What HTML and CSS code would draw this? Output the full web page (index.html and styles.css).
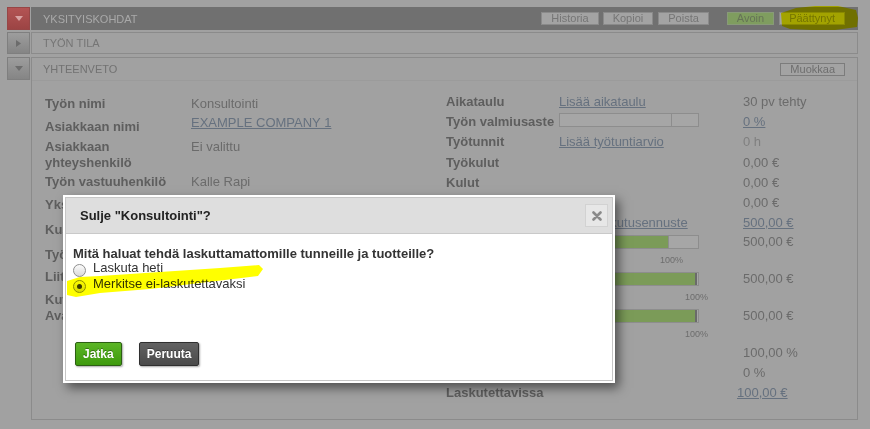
FILE: index.html
```html
<!DOCTYPE html>
<html lang="fi">
<head>
<meta charset="utf-8">
<title>Yksityiskohdat</title>
<link rel="stylesheet" href="styles.css">
</head>
<body>
<div class="page">
  <div class="acc-row">
    <div class="toggle red"><svg width="8" height="6" viewBox="0 0 8 6"><polygon points="0,0 8,0 4,5" fill="#d9a3a3"/></svg></div>
    <div class="acc-bar dark">
      <span class="acc-title">Yksityiskohdat</span>
      <span class="btns">
        <span class="hbtn">Historia</span>
        <span class="hbtn g4">Kopioi</span>
        <span class="hbtn g5">Poista</span>
        <span class="hbtn green g18">Avoin</span>
        <span class="hbtn g5">Päättynyt</span>
      </span>
    </div>
  </div>
  <div class="acc-row row-2">
    <div class="toggle short"><svg width="6" height="7" viewBox="0 0 6 7"><polygon points="0,0 5,3.5 0,7" fill="#6c6c6c"/></svg></div>
    <div class="acc-bar plain">Työn tila</div>
  </div>
  <div class="acc-row row-3">
    <div class="toggle"><svg width="8" height="6" viewBox="0 0 8 6"><polygon points="0,0 8,0 4,5" fill="#6c6c6c"/></svg></div>
    <div class="panel">
      <div class="panel-head">
        <span class="acc-title">Yhteenveto</span>
        <span class="hbtn edit">Muokkaa</span>
      </div>
      <div class="content">
        <div class="grid-left">
          <div class="lbl">Työn nimi</div><div class="val">Konsultointi</div>
          <div class="lbl down">Asiakkaan nimi</div><div class="val"><a class="lnk" href="#">EXAMPLE COMPANY 1</a></div>
          <div class="lbl">Asiakkaan yhteyshenkilö</div><div class="val">Ei valittu</div>
          <div class="lbl">Työn vastuuhenkilö</div><div class="val">Kalle Rapi</div>
          <div class="lbl">Yksikkö</div><div class="val">Konsultointi</div>
          <div class="lbl">Kustannuspaikka</div><div class="val">Ei valittu</div>
          <div class="lbl">Työn tyyppi</div><div class="val">Tuntityö</div>
          <div class="lbl">Liitteet</div><div class="val">Ei liitteitä</div>
          <div class="lbl">Kuvaus<br>Avainsanat</div><div class="val"></div>
        </div>
        <div class="grid-right">
          <div class="lbl">Aikataulu</div><div class="val"><a class="lnk" href="#">Lisää aikataulu</a></div><div class="val">30 pv tehty</div>
          <div class="lbl">Työn valmiusaste</div><div class="val"><div class="bar up"><div class="marker m80"></div></div></div><div class="val"><a class="lnk" href="#">0 %</a></div>
          <div class="lbl">Työtunnit</div><div class="val"><a class="lnk" href="#">Lisää työtuntiarvio</a></div><div class="val light">0 h</div>
          <div class="lbl">Työkulut</div><div class="val"></div><div class="val">0,00 €</div>
          <div class="lbl">Kulut</div><div class="val"></div><div class="val">0,00 €</div>
          <div class="lbl">Yhteensä</div><div class="val"></div><div class="val">0,00 €</div>
          <div class="lbl">Laskutusennuste</div><div class="val"><a class="lnk" href="#">Lisää laskutusennuste</a></div><div class="val"><a class="lnk" href="#">500,00 €</a></div>
          <div class="lbl">Laskutettu</div><div class="val"><div class="bar"><div class="fill" style="width:80%"></div></div><div class="pct p80">100%</div></div><div class="val">500,00 €</div>
          <div class="lbl">Hyväksytty</div><div class="val"><div class="bar"><div class="fill full" style="width:100%"></div></div><div class="pct p100">100%</div></div><div class="val">500,00 €</div>
          <div class="lbl">Maksettu</div><div class="val"><div class="bar"><div class="fill full" style="width:100%"></div></div><div class="pct p100">100%</div></div><div class="val">500,00 €</div>
          <div class="lbl">Kate</div><div class="val"></div><div class="val">100,00 %</div>
          <div class="lbl">Ylitys</div><div class="val"></div><div class="val">0 %</div>
          <div class="lbl">Laskutettavissa</div><div class="val"></div><div class="val shift"><a class="lnk" href="#">100,00 €</a></div>
        </div>
      </div>
    </div>
  </div>
</div>

<div class="dialog">
  <div class="dialog-inner">
    <div class="dialog-head">
      <span class="dialog-title">Sulje "Konsultointi"?</span>
      <span class="close"><svg width="10" height="10" viewBox="0 0 10 10"><path d="M1.5 1.5 L8.5 8.5 M8.5 1.5 L1.5 8.5" stroke="#8a8a8a" stroke-width="2.6" stroke-linecap="round"/></svg></span>
    </div>
    <div class="dialog-body">
      <div class="question">Mitä haluat tehdä laskuttamattomille tunneille ja tuotteille?</div>
      <label class="opt"><span class="radio"></span>Laskuta heti</label>
      <label class="opt"><span class="radio checked"></span>Merkitse ei-laskutettavaksi</label>
    </div>
    <div class="dialog-foot">
      <span class="dbtn ok">Jatka</span>
      <span class="dbtn cancel">Peruuta</span>
    </div>
  </div>
</div>

<svg class="marks" width="870" height="429" viewBox="0 0 870 429">
  <path d="M781 13 L796 8 L815 6 L838 6 L856 10 L858 18 L857 27 L835 30 L812 30 L790 29 L782 26 Z" fill="#ffff00"/>
  <path d="M67 281 L80 277 L100 276 L160 272 L220 268 L259 265 L263 269 L258 276 L200 283 L150 289 L100 293 L76 297 L67 295 Z" fill="#ffff00"/>
</svg>
</body>
</html>
```

FILE: styles.css
```css
* { box-sizing: border-box; }
html, body { margin: 0; padding: 0; }
body {
  width: 870px;
  height: 429px;
  background: #a1a1a1;
  font-family: "Liberation Sans", Arial, sans-serif;
  position: relative;
  overflow: hidden;
}
.page { padding: 7px 12px 0 7px; }

.acc-row { display: flex; gap: 1px; }
.row-2 { margin-top: 2px; }
.row-3 { margin-top: 3px; }

.toggle {
  flex: none;
  width: 23px;
  height: 23px;
  display: flex;
  align-items: center;
  justify-content: center;
  border: 1px solid #7f7f7f;
  background: linear-gradient(#9d9d9d, #858585);
}
.toggle.short { height: 22px; }
.toggle.red {
  background: linear-gradient(#b35454, #9c4444);
  border-color: #974646;
}

.acc-bar {
  flex: 1;
  height: 23px;
  display: flex;
  align-items: center;
  justify-content: space-between;
  font-size: 11px;
  text-transform: uppercase;
}
.acc-bar.dark {
  background: #707070;
  color: #a9a9a9;
  padding: 0 13px 0 12px;
}
.acc-bar.plain {
  height: 22px;
  border: 1px solid #8b8b8b;
  color: #757575;
  padding: 0 12px 0 11px;
}
.btns { display: flex; align-items: center; text-transform: none; }
.hbtn {
  display: inline-block;
  height: 13px;
  line-height: 11px;
  padding: 0 9px;
  border: 1px solid #8a8a8a;
  background: #a3a3a3;
  color: #757575;
  font-size: 11px;
  text-transform: none;
}
.hbtn.g4 { margin-left: 4px; }
.hbtn.g5 { margin-left: 5px; }
.hbtn.g18 { margin-left: 18px; }
.hbtn.green {
  background: #7f9d5f;
  border-color: #889a78;
  color: #657356;
}
.hbtn.edit { border-color: #7c7c7c; color: #6e6e6e; }

.panel {
  flex: 1;
  border: 1px solid #8b8b8b;
}
.panel-head {
  height: 23px;
  border-bottom: 1px solid #9b9b9b;
  display: flex;
  align-items: center;
  justify-content: space-between;
  padding: 0 12px 0 11px;
  font-size: 11px;
  text-transform: uppercase;
  color: #727272;
}
.content {
  display: flex;
  align-items: flex-start;
  padding: 13px 0 14px 13px;
  font-size: 13px;
  line-height: 16px;
}
.lbl { font-weight: bold; color: #5e5e5e; padding-right: 8px; }
.val { color: #6b6b6b; white-space: nowrap; }
.val.light { color: #7f7f7f; }
.lnk { color: #66717f; text-decoration: underline; }

.grid-left {
  width: 401px;
  margin-top: 2px;
  display: grid;
  grid-template-columns: 146px 255px;
  grid-template-rows: 19px 24px 35px 23px 25px 25px 22px 23px 32px;
}
.lbl.down { margin-top: 4px; }

.grid-right {
  display: grid;
  grid-template-columns: 113px 184px 100px;
  grid-template-rows: 20px 20px 21px 20px 20px 20px 19px 37px 37px 37px 20px 20px 20px;
}
.grid-right .lbl { padding-right: 0; }
.val.shift { margin-left: -6px; }

.bar {
  position: relative;
  width: 140px;
  height: 14px;
  margin-top: 1px;
  border: 1px solid #8d8d8d;
  background: #a6a6a6;
}
.bar.up { margin-top: -1px; }
.marker {
  position: absolute;
  top: -1px;
  bottom: -1px;
  width: 1px;
  background: #8d8d8d;
}
.marker.m80 { left: 111px; }
.fill {
  height: 12px;
  margin: 0 0 0 -1px;
  background: #7b9b58;
  border-right: 1px solid #8d8d8d;
}
.fill.full { border-right: 2px solid #6a6a6a; margin-right: -1px; }
.pct {
  font-size: 9px;
  line-height: 11px;
  margin-top: 6px;
  color: #6d6d6d;
}
.pct.p80 { margin-left: 101px; }
.pct.p100 { margin-left: 126px; }

/* dialog */
.dialog {
  position: absolute;
  left: 63px;
  top: 195px;
  width: 552px;
  height: 188px;
  background: #fff;
  padding: 2px;
  box-shadow: 4px 5px 10px rgba(0, 0, 0, 0.5);
}
.dialog-inner {
  height: 100%;
  border: 1px solid #c6c6c6;
  display: flex;
  flex-direction: column;
}
.dialog-head {
  height: 36px;
  flex: none;
  background: #dedede;
  border-bottom: 1px solid #c9c9c9;
  display: flex;
  align-items: center;
  justify-content: space-between;
  padding: 0 4px 0 14px;
}
.dialog-title {
  font-size: 13px;
  font-weight: bold;
  color: #222;
  line-height: 16px;
}
.close {
  width: 23px;
  height: 23px;
  border: 1px solid #d2d2d2;
  background: #e7e7e7;
  display: flex;
  align-items: center;
  justify-content: center;
}
.dialog-body {
  flex: 1;
  padding: 13px 7px 0;
  font-size: 13px;
  line-height: 14px;
  color: #333;
}
.question { font-weight: bold; }
.opt { display: flex; align-items: flex-start; }
.radio {
  flex: none;
  width: 13px;
  height: 13px;
  margin: 3px 7px 0 0;
  border-radius: 50%;
  border: 1px solid #8e8e8e;
  background: linear-gradient(#fbfbfb, #dadada);
  position: relative;
}
.radio.checked::after {
  content: "";
  position: absolute;
  left: 3px;
  top: 3px;
  width: 5px;
  height: 5px;
  border-radius: 50%;
  background: #3a3a3a;
}
.dialog-foot {
  flex: none;
  display: flex;
  gap: 17px;
  padding: 0 0 14px 9px;
}
.dbtn {
  display: inline-block;
  height: 24px;
  line-height: 22px;
  padding: 0 7px;
  border-radius: 2px;
  font-size: 12px;
  font-weight: bold;
  color: #fff;
  text-shadow: 0 -1px 0 rgba(0, 0, 0, 0.35);
  box-shadow: 1px 1px 2px rgba(0, 0, 0, 0.35);
}
.dbtn.ok {
  background: linear-gradient(#5bb526, #3e9a0d);
  border: 1px solid #2c5f13;
}
.dbtn.cancel {
  background: linear-gradient(#626262, #4a4a4a);
  border: 1px solid #2f2f2f;
}

.marks {
  position: absolute;
  left: 0;
  top: 0;
  pointer-events: none;
  mix-blend-mode: multiply;
}
```
